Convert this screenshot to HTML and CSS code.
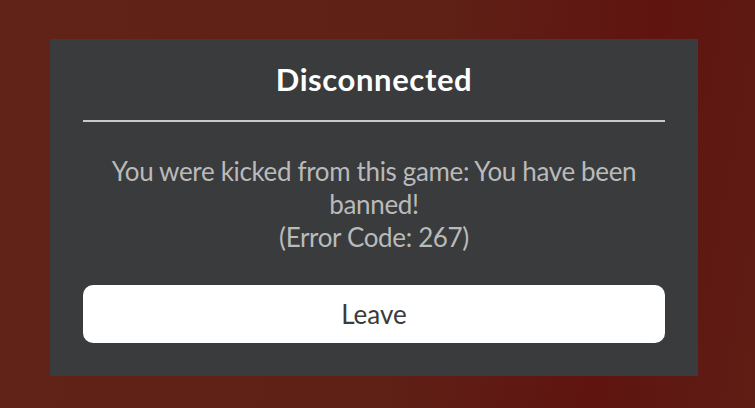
FILE: index.html
```html
<!DOCTYPE html>
<html>
<head>
<meta charset="utf-8">
<link rel="stylesheet" href="styles.css">
</head>
<body>
<div class="scene">
  <div class="dialog">
    <h1 class="title">Disconnected</h1>
    <div class="divider"></div>
    <p class="message">You were kicked from this game: You have been banned!<br>(Error Code: 267)</p>
    <button class="leave">Leave</button>
  </div>
</div>
</body>
</html>
```
FILE: styles.css
```css
html, body {
  margin: 0;
  padding: 0;
}
body {
  width: 755px;
  height: 408px;
  overflow: hidden;
  background: linear-gradient(100deg, #612318 0%, #5f2016 55%, #5f1410 80%, #5e1d14 100%);
  font-family: "Lato", "Noto Sans", sans-serif;
}
.scene {
  padding: 39px 0 0 50px;
}
.dialog {
  width: 648px;
  height: 337px;
  box-sizing: border-box;
  background: #393b3d;
  padding: 0 33px;
  display: flex;
  flex-direction: column;
  align-items: stretch;
}
.title {
  margin: 0;
  height: 80px;
  line-height: 80px;
  text-align: center;
  color: #ffffff;
  font-size: 31px;
  letter-spacing: 0.6px;
  font-weight: 700;
}
.divider {
  height: 2px;
  margin-top: 1px;
  background: #c9c9c9;
}
.message {
  margin: 33px 0 0;
  text-align: center;
  color: #bababa;
  font-size: 26px;
  letter-spacing: -0.35px;
  line-height: 33px;
  padding: 0 20px;
}
.leave {
  margin-top: 31px;
  height: 58px;
  border: none;
  border-radius: 10px;
  background: #ffffff;
  color: #393b3d;
  font-family: "Lato", "Noto Sans", sans-serif;
  font-size: 26px;
  padding: 0;
}
```
